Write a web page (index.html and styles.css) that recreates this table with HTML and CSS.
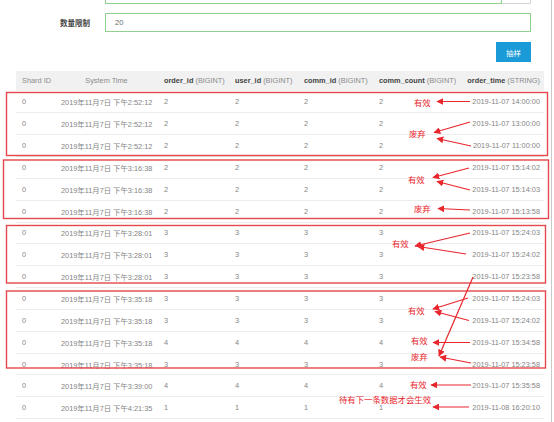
FILE: index.html
```html
<!DOCTYPE html>
<html lang="zh">
<head>
<meta charset="utf-8">
<link rel="stylesheet" href="styles.css">
</head>
<body>
<div class="page">
  <div class="field field-cut">
    <div class="input input-cut"></div>
    <div class="addon"></div>
  </div>
  <div class="field">
    <label class="label">数量限制</label>
    <div class="input">20</div>
  </div>
  <div class="actions">
    <button class="btn">抽样</button>
  </div>
  <table class="grid">
    <colgroup>
      <col class="c1"><col class="c2"><col class="c3"><col class="c4"><col class="c5"><col class="c6"><col class="c7">
    </colgroup>
    <thead>
      <tr>
        <th>Shard ID</th>
        <th class="center">System Time</th>
        <th><b>order_id</b> (BIGINT)</th>
        <th><b>user_id</b> (BIGINT)</th>
        <th><b>comm_id</b> (BIGINT)</th>
        <th><b>comm_count</b> (BIGINT)</th>
        <th class="right"><b>order_time</b> (STRING)</th>
      </tr>
    </thead>
    <tbody>
      <tr><td>0</td><td class="center">2019年11月7日 下午2:52:12</td><td>2</td><td>2</td><td>2</td><td>2</td><td class="right">2019-11-07 14:00:00</td></tr>
      <tr><td>0</td><td class="center">2019年11月7日 下午2:52:12</td><td>2</td><td>2</td><td>2</td><td>2</td><td class="right">2019-11-07 13:00:00</td></tr>
      <tr><td>0</td><td class="center">2019年11月7日 下午2:52:12</td><td>2</td><td>2</td><td>2</td><td>2</td><td class="right">2019-11-07 11:00:00</td></tr>
      <tr><td>0</td><td class="center">2019年11月7日 下午3:16:38</td><td>2</td><td>2</td><td>2</td><td>2</td><td class="right">2019-11-07 15:14:02</td></tr>
      <tr><td>0</td><td class="center">2019年11月7日 下午3:16:38</td><td>2</td><td>2</td><td>2</td><td>2</td><td class="right">2019-11-07 15:14:03</td></tr>
      <tr><td>0</td><td class="center">2019年11月7日 下午3:16:38</td><td>2</td><td>2</td><td>2</td><td>2</td><td class="right">2019-11-07 15:13:58</td></tr>
      <tr><td>0</td><td class="center">2019年11月7日 下午3:28:01</td><td>3</td><td>3</td><td>3</td><td>3</td><td class="right">2019-11-07 15:24:03</td></tr>
      <tr><td>0</td><td class="center">2019年11月7日 下午3:28:01</td><td>3</td><td>3</td><td>3</td><td>3</td><td class="right">2019-11-07 15:24:02</td></tr>
      <tr><td>0</td><td class="center">2019年11月7日 下午3:28:01</td><td>3</td><td>3</td><td>3</td><td>3</td><td class="right">2019-11-07 15:23:58</td></tr>
      <tr><td>0</td><td class="center">2019年11月7日 下午3:35:18</td><td>3</td><td>3</td><td>3</td><td>3</td><td class="right">2019-11-07 15:24:03</td></tr>
      <tr><td>0</td><td class="center">2019年11月7日 下午3:35:18</td><td>3</td><td>3</td><td>3</td><td>3</td><td class="right">2019-11-07 15:24:02</td></tr>
      <tr><td>0</td><td class="center">2019年11月7日 下午3:35:18</td><td>4</td><td>4</td><td>4</td><td>4</td><td class="right">2019-11-07 15:34:58</td></tr>
      <tr><td>0</td><td class="center">2019年11月7日 下午3:35:18</td><td>3</td><td>3</td><td>3</td><td>3</td><td class="right">2019-11-07 15:23:58</td></tr>
      <tr><td>0</td><td class="center">2019年11月7日 下午3:39:00</td><td>4</td><td>4</td><td>4</td><td>4</td><td class="right">2019-11-07 15:35:58</td></tr>
      <tr><td>0</td><td class="center">2019年11月7日 下午4:21:35</td><td>1</td><td>1</td><td>1</td><td>1</td><td class="right">2019-11-08 16:20:10</td></tr>
    </tbody>
  </table>

  <svg class="notes" viewBox="0 0 554 422" width="554" height="422" xmlns="http://www.w3.org/2000/svg">
    <defs>
      <marker id="ah" viewBox="0 0 10 10" refX="9" refY="5" markerWidth="7" markerHeight="7" markerUnits="userSpaceOnUse" orient="auto">
        <path d="M0 0 L10 5 L0 10 Z" fill="#e8262c"/>
      </marker>
    </defs>
    <g fill="none" stroke="#e4474c" stroke-width="1.4">
      <rect x="6.5" y="92.5" width="541" height="63"/>
      <rect x="3.5" y="160" width="545" height="58.5"/>
      <rect x="6.5" y="225.5" width="539" height="57.5"/>
      <rect x="6.5" y="291" width="539" height="77"/>
    </g>
    <g stroke="#e8262c" stroke-width="1.2" marker-end="url(#ah)">
      <line x1="470" y1="101.5" x2="437" y2="101.5"/>
      <line x1="470" y1="122" x2="434" y2="132.5"/>
      <line x1="471" y1="146" x2="437" y2="138.5"/>
      <line x1="469" y1="168" x2="433" y2="177.5"/>
      <line x1="470" y1="190" x2="437" y2="181.5"/>
      <line x1="470" y1="210" x2="438" y2="208.5"/>
      <line x1="470" y1="233" x2="415" y2="246"/>
      <line x1="466" y1="254" x2="418" y2="246.5"/>
      <line x1="473" y1="277" x2="439" y2="356"/>
      <line x1="468" y1="298" x2="433" y2="309"/>
      <line x1="469" y1="320.5" x2="435" y2="311.5"/>
      <line x1="470" y1="342.5" x2="433" y2="342.5"/>
      <line x1="471" y1="363" x2="440" y2="357"/>
      <line x1="471" y1="385" x2="431" y2="385"/>
      <line x1="469" y1="407" x2="433" y2="407"/>
    </g>
    <g class="note-text" fill="#e8262c">
      <text x="414" y="105.5">有效</text>
      <text x="409" y="136.5">废弃</text>
      <text x="408" y="182.5">有效</text>
      <text x="414" y="211.5">废弃</text>
      <text x="392" y="246.5">有效</text>
      <text x="408" y="313.5">有效</text>
      <text x="411" y="343.5">有效</text>
      <text x="411" y="359.5">废弃</text>
      <text x="410" y="387.5">有效</text>
      <text x="339" y="402.5">待有下一条数据才会生效</text>
    </g>
  </svg>
</div>
</body>
</html>
```

FILE: styles.css
```css
html, body {
  margin: 0;
  padding: 0;
  background: #fff;
}

body {
  font-family: "Liberation Sans", Arial, "Noto Sans CJK SC", sans-serif;
  font-size: 7.35px;
  color: #858585;
}

.page {
  position: relative;
  width: 551px;
  height: 422px;
  border-right: 1px solid #c9c9c9;
  overflow: hidden;
}

.field {
  display: flex;
  align-items: center;
  padding-left: 105px;
  width: 426px;
  position: relative;
}

.field-cut {
  height: 4px;
  align-items: stretch;
}

.input {
  flex: 1;
  height: 19px;
  box-sizing: border-box;
  border: 1px solid #8fd08f;
  padding-left: 9px;
  display: flex;
  align-items: center;
  font-size: 7.6px;
  color: #6a6a6a;
}

.input-cut {
  height: 4px;
  border-top: none;
}

.addon {
  width: 29px;
  box-sizing: border-box;
  border: 1px solid #d6d6d6;
  border-top: none;
  border-left: none;
}

.field + .field {
  margin-top: 9px;
}

.label {
  position: absolute;
  left: 0;
  width: 90px;
  text-align: right;
  font-weight: bold;
  font-size: 7.5px;
  color: #444;
}

.actions {
  display: flex;
  justify-content: flex-end;
  width: 531px;
  margin-top: 10px;
}

.btn {
  width: 35px;
  height: 20px;
  border: none;
  background: #1a9ad6;
  color: #fff;
  font-family: inherit;
  font-size: 7.4px;
  padding: 0;
}

.grid {
  margin-top: 8.5px;
  margin-left: 16px;
  width: 528px;
  table-layout: fixed;
  border-collapse: collapse;
  border-spacing: 0;
}

.c1 { width: 39px; }
.c2 { width: 103px; }
.c3 { width: 71px; }
.c4 { width: 69px; }
.c5 { width: 75px; }
.c6 { width: 87px; }
.c7 { width: 84px; }

.grid th {
  height: 20.5px;
  background: #f1f1f1;
  font-weight: normal;
  color: #8a8a8a;
  text-align: left;
  padding: 0 6px;
  white-space: nowrap;
}

.grid th b {
  color: #444;
  font-weight: bold;
}

.grid td {
  height: 21.85px;
  box-sizing: border-box;
  padding: 0 6px;
  border-bottom: 1px solid #ececec;
  white-space: nowrap;
}

.grid .center { text-align: center; }
.grid .right { text-align: right; padding-right: 4px; }

.notes {
  position: absolute;
  left: 0;
  top: 0;
}

.note-text {
  font-size: 8.4px;
  font-family: "Noto Sans CJK SC", sans-serif;
}
```
